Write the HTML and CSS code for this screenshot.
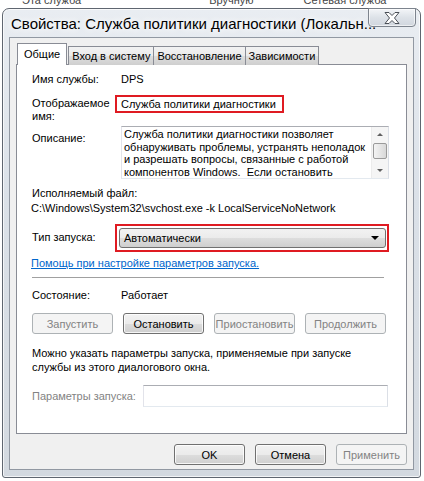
FILE: index.html
```html
<!DOCTYPE html>
<html lang="ru">
<head>
  <meta charset="UTF-8" />
  <meta name="viewport" content="width=device-width, initial-scale=1.0" />
  <title>Свойства: Служба политики диагностики</title>
  <link rel="stylesheet" href="styles.css">
</head>
<body>
  <div class="behind">
    <span class="b-desc">Эта служба</span>
    <span class="b-mode">Вручную</span>
    <span class="b-acct">Сетевая служба</span>
  </div>

  <div class="window">
    <div class="titlebar">
      <span class="title">Свойства: Служба политики диагностики (Локальн...</span>
    </div>
    <div class="close">
      <svg width="16" height="12" viewBox="0 0 16 12">
        <polygon points="1,0.5 5,0.5 8,3.5 11,0.5 15,0.5 10.5,6 15,11.5 11,11.5 8,8.5 5,11.5 1,11.5 5.5,6" fill="#fff" stroke="#4a4f57" stroke-width="1" stroke-linejoin="round"/>
      </svg>
    </div>

    <div class="client">
      <div class="tabs">
        <div class="tab active">Общие</div>
        <div class="tab">Вход в систему</div>
        <div class="tab">Восстановление</div>
        <div class="tab">Зависимости</div>
      </div>

      <div class="page">
        <div class="row r-name">
          <span class="label">Имя службы:</span>
          <span class="value">DPS</span>
        </div>

        <div class="row r-display">
          <span class="label">Отображаемое<br>имя:</span>
          <span class="marked">Служба политики диагностики</span>
        </div>

        <div class="row r-desc">
          <span class="label">Описание:</span>
          <div class="memo">
            <div class="memo-text">Служба политики диагностики позволяет<br>обнаруживать проблемы, устранять неполадок<br>и разрешать вопросы, связанные с работой<br>компонентов Windows.&nbsp; Если остановить</div>
            <div class="vscroll">
              <div class="sb-btn"><span class="up"></span></div>
              <div class="sb-track"><div class="sb-thumb"></div></div>
              <div class="sb-btn"><span class="down"></span></div>
            </div>
          </div>
        </div>

        <div class="exe-label">Исполняемый файл:</div>
        <div class="exe-path">C:\Windows\System32\svchost.exe -k LocalServiceNoNetwork</div>

        <div class="row r-start">
          <span class="label">Тип запуска:</span>
          <div class="marked-combo">
            <div class="combo">Автоматически<span class="arrow"></span></div>
          </div>
        </div>

        <a class="help" href="#">Помощь при настройке параметров запуска.</a>
        <div class="sep"></div>

        <div class="row r-state">
          <span class="label">Состояние:</span>
          <span class="value">Работает</span>
        </div>

        <div class="svc-buttons">
          <button class="btn" disabled>Запустить</button>
          <button class="btn">Остановить</button>
          <button class="btn" disabled>Приостановить</button>
          <button class="btn" disabled>Продолжить</button>
        </div>

        <p class="note">Можно указать параметры запуска, применяемые при запуске<br>службы из этого диалогового окна.</p>

        <div class="row r-params">
          <span class="label params-label">Параметры запуска:</span>
          <div class="field"></div>
        </div>
      </div>

      <div class="dialog-buttons">
        <button class="btn">OK</button>
        <button class="btn">Отмена</button>
        <button class="btn" disabled>Применить</button>
      </div>
    </div>
  </div>
</body>
</html>
```

FILE: styles.css
```css
* {
  box-sizing: border-box;
}
body {
  margin: 0;
  width: 424px;
  height: 481px;
  overflow: hidden;
  background: #fff;
  font-family: "Liberation Sans", Arial, sans-serif;
  font-size: 11px;
  color: #000;
}

/* list behind the dialog, only the bottom of it peeks out */
.behind {
  height: 8px;
  overflow: hidden;
  display: flex;
  font-size: 11px;
  line-height: 12px;
  color: #444;
}
.behind span {
  margin-top: -6px;
}
.b-desc { margin-left: 22px; }
.b-mode { margin-left: 128px; }
.b-acct { margin-left: 50px; }

.window {
  position: relative;
  margin-left: 2px;
  width: 419px;
  height: 470px;
  border: 1px solid #5f6670;
  border-radius: 7px 7px 3px 3px;
  background: linear-gradient(#e9edf2, #dbe1e8 40%, #d3d9e0);
  box-shadow: inset 0 0 0 1px rgba(255,255,255,0.7);
  padding: 0 6px 7px 6px;
}
.titlebar {
  height: 28px;
  padding: 5px 0 0 2px;
}
.title {
  font-size: 15px;
  line-height: 20px;
  text-shadow: 0 0 6px #fff, 0 0 10px #fff;
}
.close {
  position: absolute;
  top: -1px;
  right: 4px;
  width: 48px;
  height: 19px;
  border: 1px solid #7d848e;
  border-radius: 0 0 4px 4px;
  background: linear-gradient(#f3f5f8, #dde2e8 50%, #d0d6de);
  box-shadow: inset 0 0 0 1px rgba(255,255,255,0.6);
  display: flex;
  align-items: center;
  justify-content: center;
}

.client {
  height: 433px;
  border: 1px solid #9198a2;
  background: #f0f0f0;
  padding: 5px 6px 0 6px;
}

.tabs {
  display: flex;
  align-items: flex-end;
  height: 22px;
  padding-left: 1px;
}
.tab {
  height: 19px;
  margin-left: -1px;
  padding: 2px 3px 0 3px;
  border: 1px solid #898c95;
  border-bottom: none;
  background: linear-gradient(#f2f2f2, #ebebeb 50%, #dddddd 51%, #cfcfcf);
  line-height: 15px;
}
.tab.active {
  position: relative;
  z-index: 1;
  height: 22px;
  margin-left: 0;
  margin-right: 2px;
  padding: 3px 6px 0 6px;
  background: #fff;
}

.page {
  height: 370px;
  margin-top: -1px;
  border: 1px solid #898c95;
  background: #fff;
  padding: 0 17px 0 15px;
}

.row {
  display: flex;
  align-items: flex-start;
}
.label {
  width: 89px;
  flex-shrink: 0;
  line-height: 15px;
}
.value {
  line-height: 15px;
}

.r-name {
  margin-top: 7px;
}

.r-display {
  margin-top: 8px;
}
.r-display .label {
  line-height: 13px;
  padding-top: 2px;
}
.marked {
  margin-left: -6px;
  width: 169px;
  height: 18px;
  border: 2px solid #df1b22;
  padding: 0 0 0 4px;
  line-height: 14px;
  white-space: nowrap;
}

.r-desc {
  margin-top: 3px;
}
.r-desc .label {
  padding-top: 5px;
}
.memo {
  width: 268px;
  height: 53px;
  border: 1px solid #abadb3;
  border-left-color: #e2e3ea;
  border-right-color: #dbdfe6;
  border-bottom-color: #e3e9ef;
  display: flex;
  overflow: hidden;
}
.memo-text {
  flex: 1;
  padding: 1px 2px 0 2px;
  line-height: 12.5px;
  white-space: nowrap;
  overflow: hidden;
}
.vscroll {
  width: 17px;
  display: flex;
  flex-direction: column;
  background: #f5f5f5;
  border-left: 1px solid #ececec;
}
.sb-btn {
  height: 15px;
  display: flex;
  align-items: center;
  justify-content: center;
}
.up, .down {
  width: 0;
  height: 0;
  border-left: 3px solid transparent;
  border-right: 3px solid transparent;
}
.up {
  border-bottom: 3px solid #606060;
}
.down {
  border-top: 3px solid #606060;
}
.sb-track {
  flex: 1;
  padding: 1px 1px;
}
.sb-thumb {
  height: 16px;
  border: 1px solid #9a9a9a;
  border-radius: 2px;
  background: linear-gradient(90deg, #f3f3f3, #e6e6e6 50%, #d8d8d8);
}

.exe-label {
  margin-top: 7px;
  line-height: 15px;
}
.exe-path {
  margin-left: -1px;
  line-height: 15px;
}

.r-start {
  margin-top: 8px;
}
.r-start .label {
  padding-top: 6px;
}
.marked-combo {
  margin-left: -6px;
  width: 275px;
  height: 28px;
  border: 2px solid #df1b22;
  padding: 2px 1px 2px 2px;
}
.combo {
  height: 100%;
  border: 1px solid #707070;
  border-radius: 3px;
  background: linear-gradient(#f2f2f2, #ebebeb 50%, #dddddd 51%, #cfcfcf);
  padding: 0 0 0 4px;
  line-height: 20px;
  display: flex;
  justify-content: space-between;
  align-items: center;
}
.arrow {
  margin-right: 6px;
  width: 0;
  height: 0;
  border-left: 4px solid transparent;
  border-right: 4px solid transparent;
  border-top: 4px solid #000;
}

.help {
  display: block;
  margin-top: 4px;
  margin-left: -1px;
  line-height: 15px;
  color: #0066cc;
  text-decoration: underline;
}
.sep {
  margin-top: 6px;
  width: 352px;
  height: 1px;
  background: #a0a0a0;
}

.r-state {
  margin-top: 10px;
}

.btn {
  height: 21px;
  padding: 0;
  border: 1px solid #707070;
  border-radius: 3px;
  background: linear-gradient(#f2f2f2, #ebebeb 50%, #dddddd 51%, #cfcfcf);
  box-shadow: inset 0 0 0 1px rgba(255,255,255,0.8);
  font-family: inherit;
  font-size: 11px;
  color: #000;
}
.btn:disabled {
  border-color: #adb2b5;
  background: #f4f4f4;
  box-shadow: none;
  color: #838383;
}

.svc-buttons {
  margin-top: 10px;
  display: grid;
  grid-template-columns: repeat(4, 81px);
  column-gap: 10px;
}

.note {
  margin: 12px 0 0 0;
  line-height: 14px;
}

.r-params {
  margin-top: 11px;
  align-items: center;
}
.params-label {
  width: 111px;
  color: #838383;
}
.field {
  width: 245px;
  height: 22px;
  border: 1px solid #abadb3;
  border-left-color: #e2e3ea;
  border-right-color: #dbdfe6;
  border-bottom-color: #e3e9ef;
  background: #fff;
}

.dialog-buttons {
  margin-top: 10px;
  display: flex;
  justify-content: flex-end;
  gap: 10px;
}
.dialog-buttons .btn {
  width: 71px;
}
```
